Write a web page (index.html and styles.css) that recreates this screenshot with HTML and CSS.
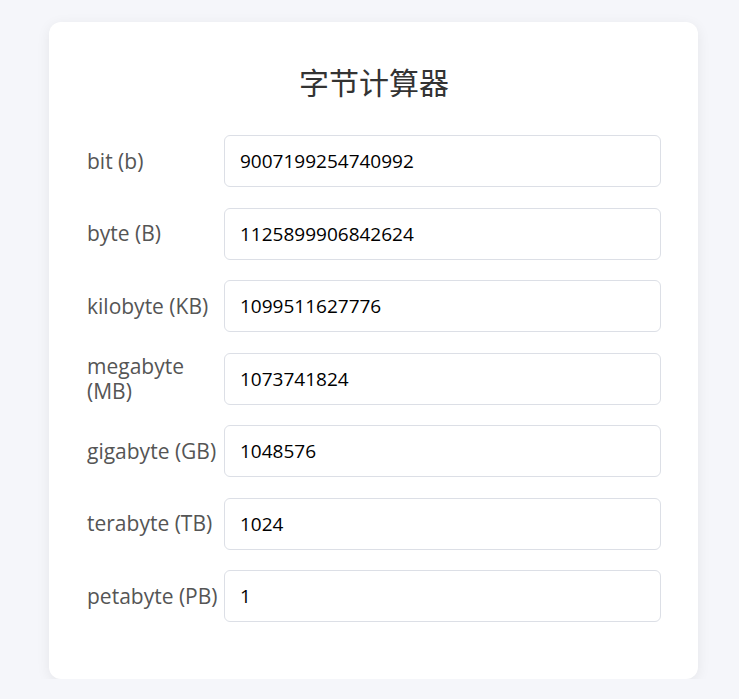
FILE: index.html
```html
<!DOCTYPE html>
<html lang="zh">
<head>
<meta charset="utf-8">
<title>字节计算器</title>
<link rel="stylesheet" href="styles.css">
</head>
<body>
<div class="card">
  <h1 class="title">字节计算器</h1>
  <div class="form">
    <div class="row"><label class="label">bit (b)</label><input class="field" value="9007199254740992"></div>
    <div class="row"><label class="label">byte (B)</label><input class="field" value="1125899906842624"></div>
    <div class="row"><label class="label">kilobyte (KB)</label><input class="field" value="1099511627776"></div>
    <div class="row"><label class="label">megabyte (MB)</label><input class="field" value="1073741824"></div>
    <div class="row"><label class="label">gigabyte (GB)</label><input class="field" value="1048576"></div>
    <div class="row"><label class="label">terabyte (TB)</label><input class="field" value="1024"></div>
    <div class="row"><label class="label">petabyte (PB)</label><input class="field" value="1"></div>
  </div>
</div>
</body>
</html>
```
FILE: styles.css
```css
html, body {
  margin: 0;
  padding: 0;
  background: #f5f6fa;
}
body {
  font-family: "Open Sans", "Noto Sans", "Noto Sans CJK SC", sans-serif;
  padding: 22px 0 0 49px;
}
.card {
  width: 649px;
  height: 657px;
  box-sizing: border-box;
  background: #fff;
  border-radius: 12px;
  box-shadow: 0 3px 14px rgba(0, 0, 0, 0.07);
  padding: 35px 37px 0 38px;
}
.title {
  margin: 0;
  text-align: center;
  font-family: "Noto Sans CJK SC", sans-serif;
  font-weight: 400;
  font-size: 30px;
  line-height: 48px;
  color: #333;
}
.form {
  margin-top: 30px;
  display: flex;
  flex-direction: column;
  gap: 20.5px;
}
.row {
  display: flex;
  align-items: center;
}
.label {
  width: 137px;
  flex: none;
  box-sizing: border-box;
  padding-right: 1px;
  font-size: 21px;
  line-height: 25px;
  color: #555;
}
.field {
  flex: 1;
  min-width: 0;
  height: 52px;
  box-sizing: border-box;
  border: 1px solid #dcdfe6;
  border-radius: 6px;
  padding: 0 15px;
  font-family: "Open Sans", "Noto Sans", sans-serif;
  font-size: 19px;
  color: #000;
  background: #fff;
  outline: none;
}
```
